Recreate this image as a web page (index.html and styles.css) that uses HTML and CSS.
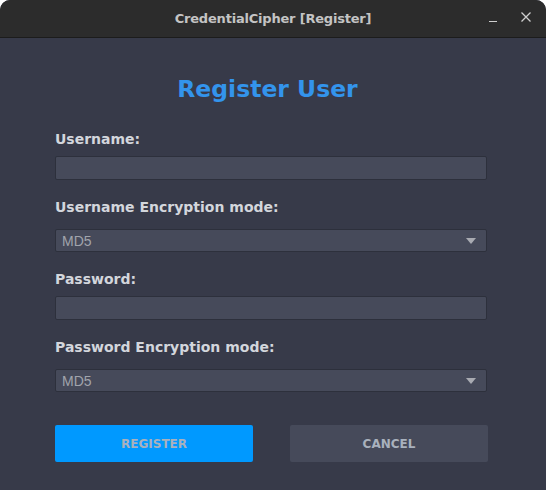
FILE: index.html
```html
<!DOCTYPE html>
<html>
<head>
<meta charset="utf-8">
<link rel="stylesheet" href="styles.css">
</head>
<body>
<div class="window">
  <header class="titlebar">
    <span class="title">CredentialCipher [Register]</span>
    <div class="controls">
      <span class="minimize"></span>
      <svg class="close" width="10" height="10" viewBox="0 0 10 10"><path d="M0.5 0.5 L9.5 9.5 M9.5 0.5 L0.5 9.5" stroke="#cfcfcf" stroke-width="1.3"/></svg>
    </div>
  </header>
  <main class="content">
    <h1 class="heading">Register User</h1>
    <label class="label first">Username:</label>
    <div class="input"></div>
    <label class="label">Username Encryption mode:</label>
    <div class="combo"><span>MD5</span><span class="arrow"></span></div>
    <label class="label">Password:</label>
    <div class="input"></div>
    <label class="label">Password Encryption mode:</label>
    <div class="combo"><span>MD5</span><span class="arrow"></span></div>
    <div class="buttons">
      <button class="btn primary">REGISTER</button>
      <button class="btn secondary">CANCEL</button>
    </div>
  </main>
</div>
</body>
</html>
```
FILE: styles.css
```css
html, body {
  margin: 0;
  padding: 0;
  background: #ffffff;
}
.window {
  width: 546px;
  height: 490px;
  display: flex;
  flex-direction: column;
  border-radius: 10px 10px 0 0;
  overflow: hidden;
  background: #373a49;
}
.titlebar {
  height: 37px;
  background: #2c2c2c;
  border-bottom: 1px solid #1c1c1c;
  display: flex;
  align-items: center;
  justify-content: center;
  position: relative;
  flex-shrink: 0;
}
.title {
  font-family: "DejaVu Sans", sans-serif;
  font-weight: bold;
  font-size: 13px;
  color: #c4c4c4;
  letter-spacing: -0.2px;
}
.controls {
  position: absolute;
  right: 15px;
  top: 0;
  height: 37px;
  display: flex;
  align-items: center;
  gap: 24px;
}
.minimize {
  width: 8px;
  height: 1px;
  background: #cfcfcf;
  margin-top: 6px;
}
.close {
  display: block;
  margin-top: -3px;
}
.content {
  display: flex;
  flex-direction: column;
  padding: 0 58px 0 55px;
}
.heading {
  margin: 36px 0 0 0;
  padding-right: 8px;
  height: 30px;
  line-height: 30px;
  text-align: center;
  font-family: "DejaVu Sans", sans-serif;
  font-weight: bold;
  font-size: 23.5px;
  color: #3394ec;
}
.label {
  display: block;
  font-family: "DejaVu Sans", sans-serif;
  font-weight: bold;
  font-size: 14px;
  line-height: 16px;
  height: 16px;
  color: #d3d6dc;
  margin-top: 19px;
}
.label.first {
  margin-top: 27px;
}
.input {
  margin-top: 9px;
  margin-right: 1px;
  height: 22px;
  background: #464a5a;
  border: 1px solid #2d303c;
  border-radius: 2px;
}
.combo {
  margin-top: 14px;
  margin-right: 1px;
  height: 21px;
  background: #464a5a;
  border: 1px solid #2d303c;
  border-radius: 2px;
  display: flex;
  align-items: center;
  justify-content: space-between;
  padding: 0 10px 0 6px;
  font-family: "Liberation Sans", Arial, sans-serif;
  font-size: 14px;
  color: #a1a4ac;
}
.arrow {
  width: 0;
  height: 0;
  border-left: 5px solid transparent;
  border-right: 5px solid transparent;
  border-top: 6px solid #a9abb2;
}
.buttons {
  margin-top: 33px;
  display: flex;
  justify-content: space-between;
}
.btn {
  width: 198px;
  height: 37px;
  border: none;
  border-radius: 2px;
  font-family: "DejaVu Sans", sans-serif;
  font-weight: bold;
  font-size: 12px;
  color: #a9b1bd;
  padding: 0;
}
.btn.primary {
  background: #0099ff;
}
.btn.secondary {
  background: #464a5a;
}
```
